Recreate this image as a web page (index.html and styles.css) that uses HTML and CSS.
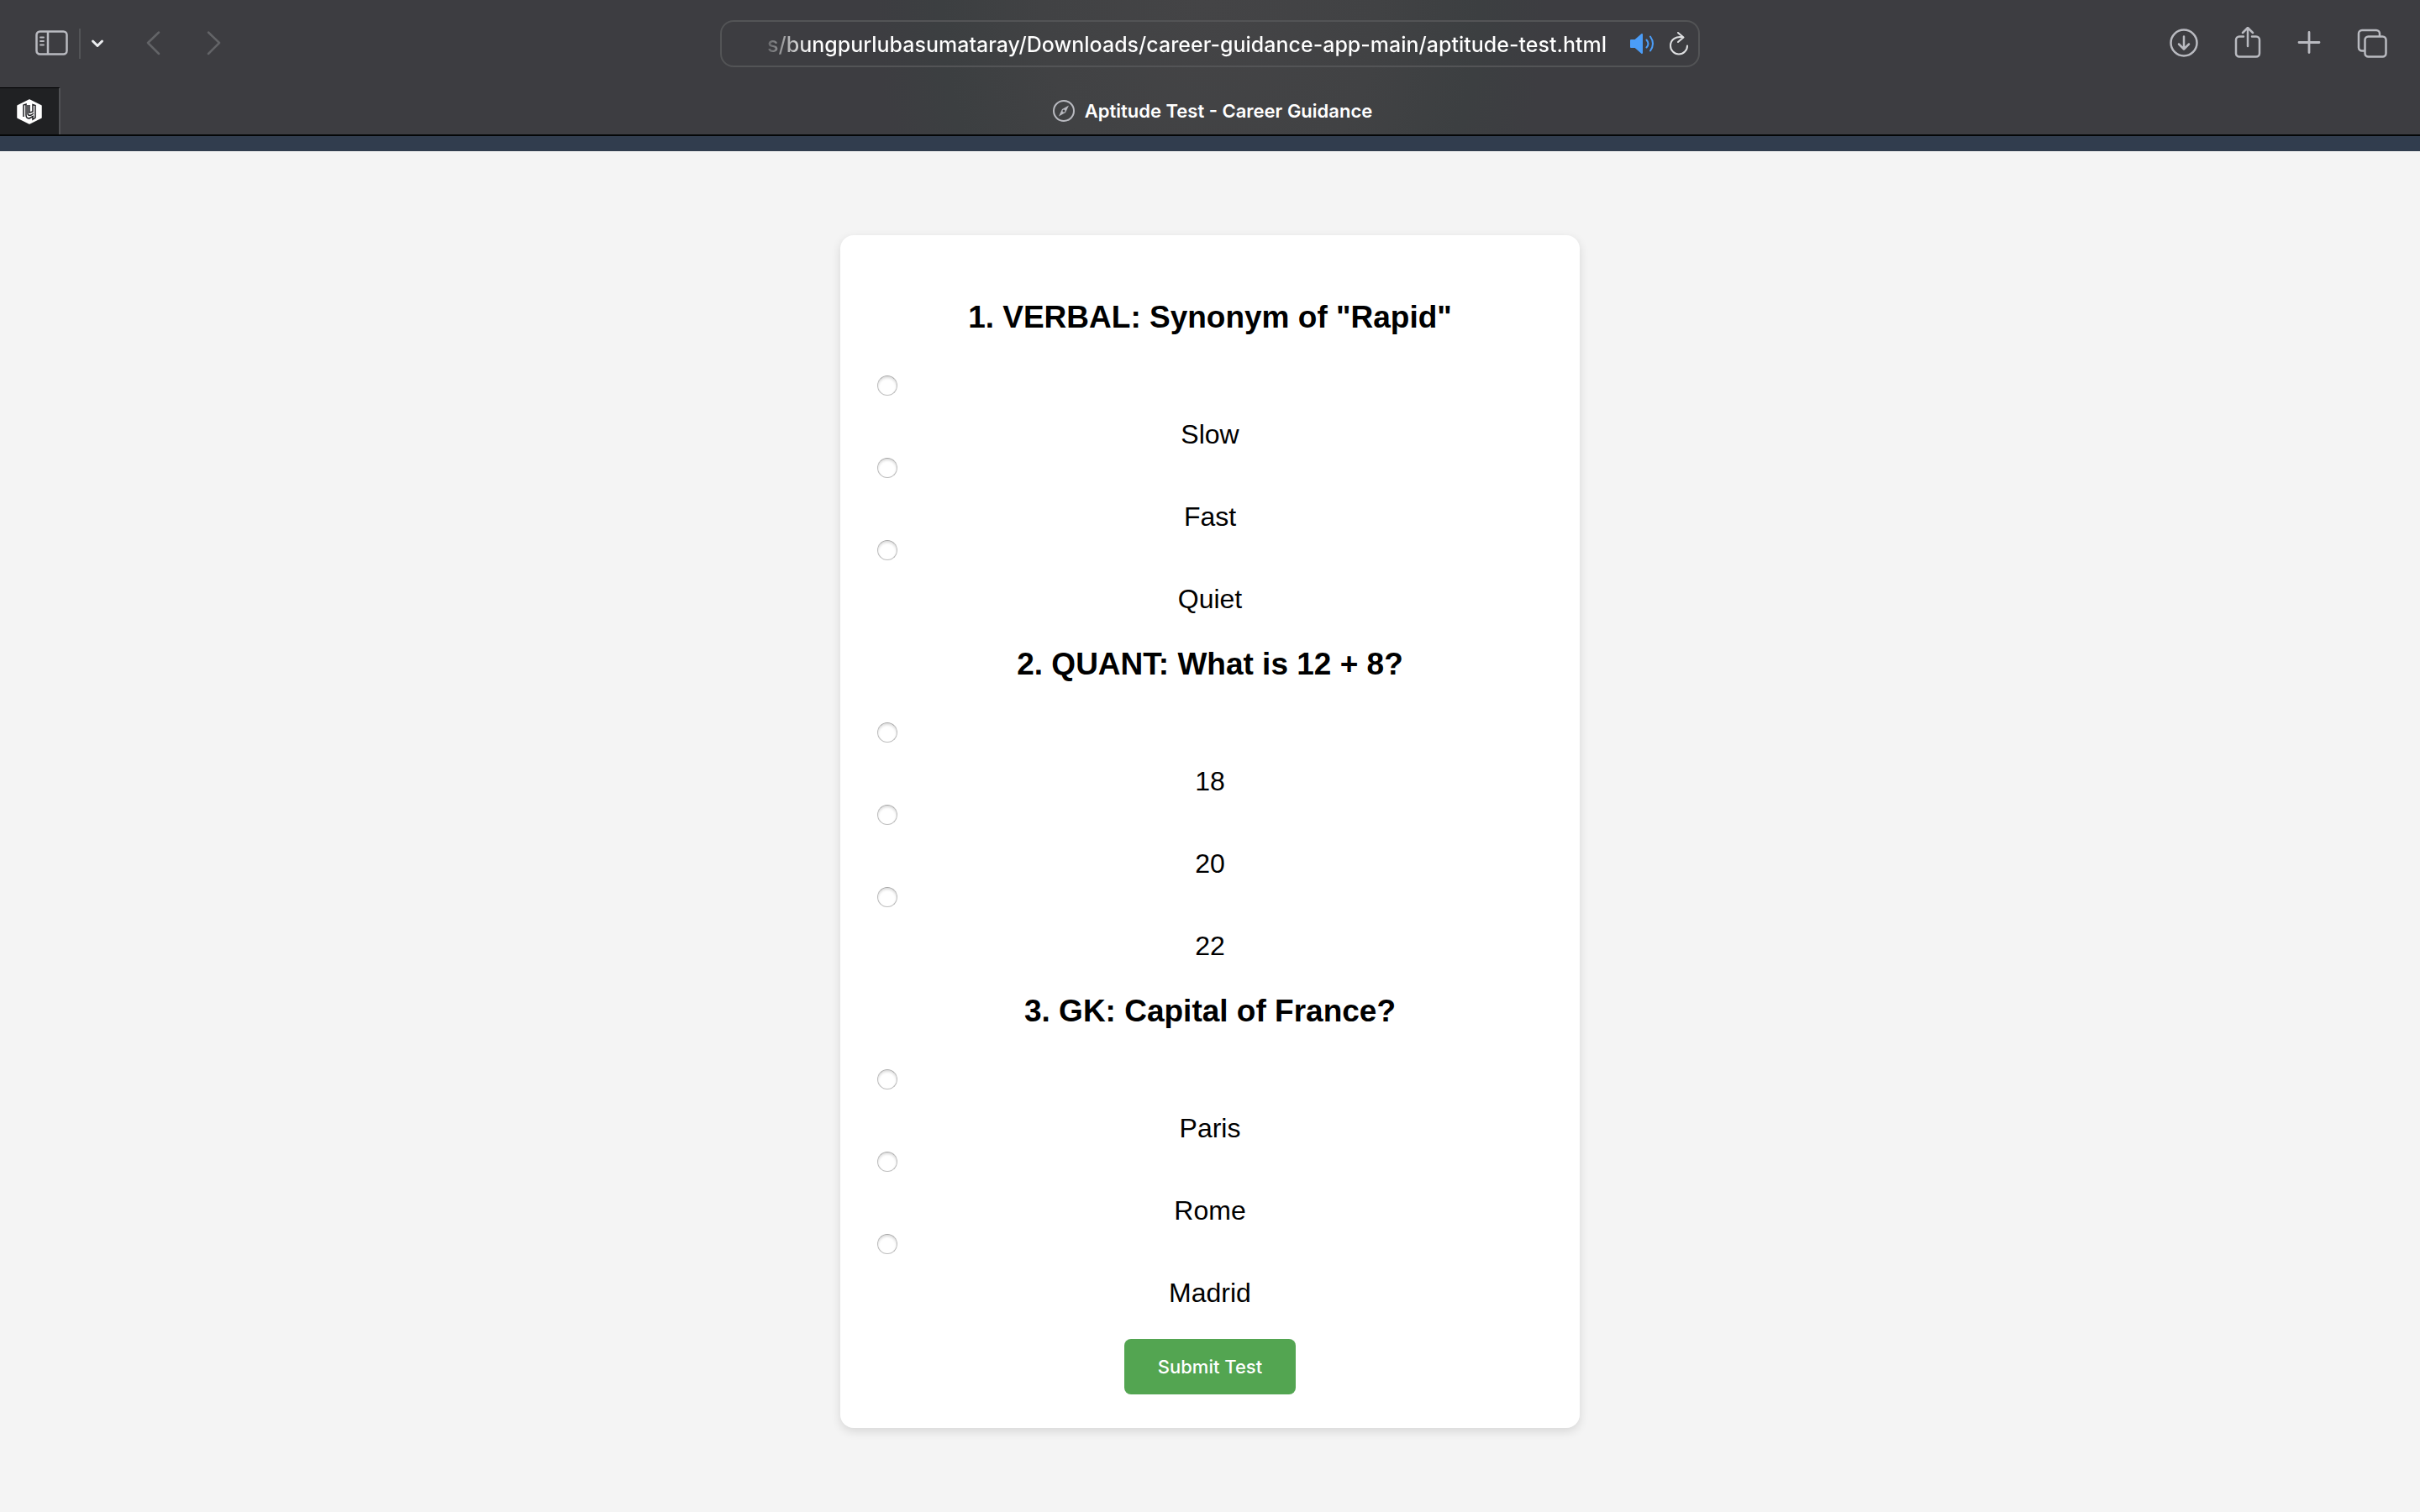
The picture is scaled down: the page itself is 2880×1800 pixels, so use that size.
FILE: index.html
```html
<!DOCTYPE html>
<html lang="en">
<head>
<meta charset="utf-8">
<title>Aptitude Test - Career Guidance</title>
<link rel="stylesheet" href="styles.css">
</head>
<body>
<header class="browser">
  <div class="toolbar">
    <div class="tools tools-left">
      <button class="tool" type="button" aria-label="Sidebar"><svg width="40" height="32" viewBox="0 0 40 32" fill="none" stroke="#b9bac0" stroke-width="2.500"><rect x="1.500" y="1.500" width="36" height="27" rx="4"/><path d="M15 1v28"/><path d="M6 8.500h4M6 13h4M6 17.500h4" stroke-width="1.800" stroke-linecap="round"/></svg></button>
      <span class="divider"></span>
      <button class="tool chevron" type="button" aria-label="Tab groups"><svg width="16" height="12" viewBox="0 0 16 12" fill="none" stroke="#eceef0" stroke-width="3" stroke-linecap="round" stroke-linejoin="round"><path d="M2.500 3l5.500 5.500L13.500 3"/></svg></button>
      <button class="tool back" type="button" aria-label="Back"><svg width="18" height="30" viewBox="0 0 18 30" fill="none" stroke="#636467" stroke-width="2.500" stroke-linecap="round" stroke-linejoin="round"><path d="M15 1.500L2 14l13 13"/></svg></button>
      <button class="tool forward" type="button" aria-label="Forward"><svg width="18" height="30" viewBox="0 0 18 30" fill="none" stroke="#636467" stroke-width="2.500" stroke-linecap="round" stroke-linejoin="round"><path d="M2 1.500L15 14 2 27"/></svg></button>
    </div>
    <div class="address">
      <input class="url" type="text" aria-label="Address" value="s/bungpurlubasumataray/Downloads/career-guidance-app-main/aptitude-test.html">
      <button class="tool sound" type="button" aria-label="Mute"><svg width="30" height="26" viewBox="0 0 30 26" fill="none" stroke="#4b9df8" stroke-width="2" stroke-linecap="round"><path d="M2 9h5l8-7v22l-8-7H2z" fill="#4b9df8" stroke-linejoin="round"/><path d="M20.500 8.500q4 4.500 0 9M25 4.500q6 8.500 0 17"/></svg></button>
      <button class="tool" type="button" aria-label="Reload"><svg width="24" height="30" viewBox="0 0 24 30" fill="none" stroke="#dfe0e2" stroke-width="2" stroke-linecap="round" stroke-linejoin="round"><path d="M17 7.500C9 5.500 2 10 2 17.500a10 10 0 0 0 20 0M11 2l6.500 5.500L11 13"/></svg></button>
    </div>
    <div class="tools tools-right">
      <button class="tool" type="button" aria-label="Downloads"><svg width="34" height="40" viewBox="1 2 34 40" fill="none" stroke="#b9bac0" stroke-width="2.500" stroke-linecap="round" stroke-linejoin="round"><circle cx="18" cy="21" r="15.500"/><path d="M18 13.500v14.500M12 22.500l6 6 6-6"/></svg></button>
      <button class="tool" type="button" aria-label="Share"><svg width="32" height="40" viewBox="0 1 32 40" fill="none" stroke="#b9bac0" stroke-width="2.500" stroke-linecap="round" stroke-linejoin="round"><path d="M11 12.500H6a4 4 0 0 0-4 4v16a4 4 0 0 0 4 4h20a4 4 0 0 0 4-4v-16a4 4 0 0 0-4-4h-5M16 24V2.500M10 8l6-6 6 6"/></svg></button>
      <button class="tool" type="button" aria-label="New tab"><svg width="28" height="40" viewBox="0 1 28 40" fill="none" stroke="#b9bac0" stroke-width="2.800" stroke-linecap="round"><path d="M14 7.500v24M2 19.500h24"/></svg></button>
      <button class="tool" type="button" aria-label="Tab overview"><svg width="36" height="40" viewBox="0 1 36 40" fill="none" stroke="#b9bac0" stroke-width="2.500"><rect x="9.500" y="12.500" width="25" height="24" rx="4"/><path d="M9 29.500H6a4 4 0 0 1-4-4V9a4 4 0 0 1 4-4h17a4 4 0 0 1 4 4v3"/></svg></button>
    </div>
  </div>
  <nav class="tabs">
    <a class="pinned" href="#pinned" aria-label="Pinned tab"><svg width="30" height="30" viewBox="0 0 30 30" fill="none" stroke="#202124" stroke-width="1.500"><path d="M15 1l14 7v14l-14 7-14-7V8z" fill="#fff" stroke="#fff" stroke-linejoin="round"/><path d="M8 21V7l3-1v13q0 4 4 4l5-3M13 7v10q0 3 4 2l3-2M15 7v9l4-1V6.500l3 1V22l-3 2v-3l-5 2"/></svg></a>
    <a class="current" href="#test"><svg width="26" height="26" viewBox="0 0 26 26" fill="none" stroke="#b9bac0" stroke-width="2"><circle cx="13" cy="13" r="12"/><path d="M19 6.500l-4 8.500-8 4.500 4-8.500z" fill="#b9bac0" stroke="none"/><circle cx="13" cy="13" r="1.500" fill="#3e3f41" stroke="none"/></svg><span>Aptitude Test - Career Guidance</span></a>
  </nav>
</header>
<div class="site-bar"></div>
<main class="page">
  <form class="card" id="test">
    <fieldset class="question">
      <legend class="title">1. VERBAL: Synonym of "Rapid"</legend>
      <label class="option"><input class="radio" type="radio" name="q1"><span>Slow</span></label>
      <label class="option"><input class="radio" type="radio" name="q1"><span>Fast</span></label>
      <label class="option"><input class="radio" type="radio" name="q1"><span>Quiet</span></label>
    </fieldset>
    <fieldset class="question">
      <legend class="title">2. QUANT: What is 12 + 8?</legend>
      <label class="option"><input class="radio" type="radio" name="q2"><span>18</span></label>
      <label class="option"><input class="radio" type="radio" name="q2"><span>20</span></label>
      <label class="option"><input class="radio" type="radio" name="q2"><span>22</span></label>
    </fieldset>
    <fieldset class="question">
      <legend class="title">3. GK: Capital of France?</legend>
      <label class="option"><input class="radio" type="radio" name="q3"><span>Paris</span></label>
      <label class="option"><input class="radio" type="radio" name="q3"><span>Rome</span></label>
      <label class="option"><input class="radio" type="radio" name="q3"><span>Madrid</span></label>
    </fieldset>
    <button class="submit" type="submit">Submit Test</button>
  </form>
</main>
</body>
</html>
```
FILE: styles.css
```css
* { box-sizing: border-box; }
body {
  margin: 0;
  min-height: 100vh;
  background: #f4f4f4;
  color: #000;
  font-family: "Liberation Sans", Arial, sans-serif;
}
.browser {
  background: radial-gradient(ellipse 400px 500px at 50% 0, #444446 0%, #414244 50%, #3c3f41 80%, #3d3d41 100%);
  border-bottom: 2px solid #050708;
  font-family: Inter, sans-serif;
}
.toolbar {
  display: grid;
  grid-template-columns: 1fr 1166px 1fr;
  align-items: center;
  height: 104px;
}
.tools { display: flex; align-items: center; }
.tools-left { padding-left: 42px; }
.tools-right { justify-content: flex-end; gap: 43px; padding-right: 39px; }
.tool {
  display: flex;
  padding: 0;
  border: 0;
  background: none;
}
.divider { width: 2px; height: 36px; margin-left: 12px; background: #535457; }
.chevron { margin-left: 12px; }
.back { margin-left: 50px; }
.forward { margin-left: 54px; }
.address {
  display: flex;
  align-items: center;
  height: 56px;
  padding: 0 11px 0 54px;
  border: 2px solid #535456;
  border-radius: 16px;
}
.url {
  flex: 1;
  min-width: 0;
  padding: 2px 0 0;
  border: 0;
  outline: 0;
  background: linear-gradient(90deg, #66676a, #fff 52px);
  background-clip: text;
  color: transparent;
  font: 500 25px/36px Inter, sans-serif;
}
.sound { margin: 0 17px 0 16px; }
.tabs { display: flex; height: 56px; }
.pinned {
  display: flex;
  align-items: center;
  justify-content: center;
  width: 72px;
  background: #202123;
  border-top: 1px solid #000;
  border-right: 2px solid #505154;
}
.current {
  display: flex;
  flex: 1;
  align-items: center;
  justify-content: center;
  gap: 12px;
  padding-right: 66px;
  color: #fff;
  font-size: 22px;
  font-weight: 600;
  line-height: 28px;
  text-decoration: none;
}
.site-bar { height: 18px; background: #313d4e; }
.page { padding: 100px 40px; }
.card {
  display: flex;
  flex-direction: column;
  width: 100%;
  max-width: 880px;
  margin: 0 auto;
  padding: 40px;
  border-radius: 16px;
  background: #fff;
  box-shadow: 0 4px 12px rgba(0, 0, 0, .12);
}
.question { margin: 0; padding: 0; border: 0; min-width: 0; }
.title {
  display: block;
  width: 100%;
  padding: 34px 0 38px;
  font-size: 37px;
  font-weight: 700;
  line-height: 47px;
  text-align: center;
}
.option {
  display: flex;
  flex-direction: column;
  height: 98px;
  padding-top: 8px;
  gap: 27px;
  font-size: 32px;
  line-height: 38px;
  text-align: center;
}
.radio {
  appearance: none;
  width: 24px;
  height: 24px;
  margin: 0 4px;
  border: 1px solid #bdbdbd;
  border-top-color: #a6a6a6;
  border-radius: 50%;
  background: #fff;
  box-shadow: inset 0 2px 3px rgba(0, 0, 0, .14);
}
.submit {
  align-self: center;
  height: 66px;
  margin-top: 35px;
  padding: 0 40px;
  border: 0;
  border-radius: 8px;
  background: #53a551;
  color: #fff;
  font: 500 22px/28px Inter, sans-serif;
}
```
